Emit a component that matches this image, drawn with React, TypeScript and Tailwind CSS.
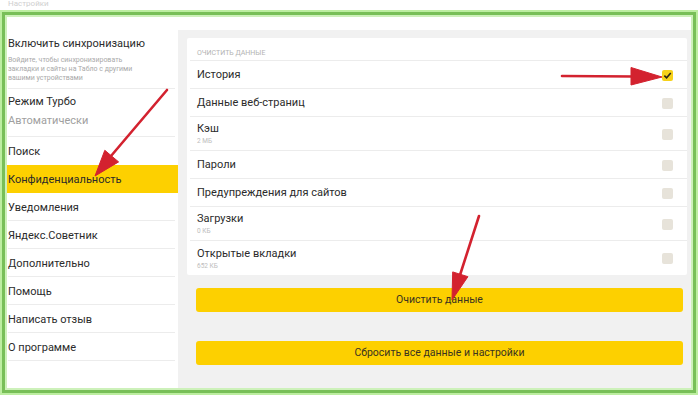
import React from 'react';

const font = { fontFamily: 'Roboto, "Noto Sans", "DejaVu Sans", sans-serif' };

type Item = { title: string; sub?: string; checked?: boolean };

const menu = [
  'Уведомления',
  'Яндекс.Советник',
  'Дополнительно',
  'Помощь',
  'Написать отзыв',
  'О программе',
];

const items: Item[] = [
  { title: 'История', checked: true },
  { title: 'Данные веб-страниц' },
  { title: 'Кэш', sub: '2 МБ' },
  { title: 'Пароли' },
  { title: 'Предупреждения для сайтов' },
  { title: 'Загрузки', sub: '0 КБ' },
  { title: 'Открытые вкладки', sub: '652 КБ' },
];

const Checkbox: React.FC<{ checked?: boolean }> = ({ checked }) =>
  checked ? (
    <div className="w-[11px] h-[11px] rounded-[2px] bg-[#f6d11a] flex items-center justify-center">
      <svg width="9" height="9" viewBox="0 0 10 10">
        <path d="M1.5 5.2 L4 7.6 L8.6 2.2" fill="none" stroke="#2a2417" strokeWidth="1.8" />
      </svg>
    </div>
  ) : (
    <div className="w-[11px] h-[11px] rounded-[2px] bg-[#e7e3da]" />
  );

const Arrows: React.FC = () => (
  <svg className="absolute inset-0 pointer-events-none" width="700" height="400" viewBox="0 0 700 400">
    <g fill="#d3222f" stroke="#d3222f">
      <line x1="167" y1="90" x2="111" y2="156" strokeWidth="2.6" strokeLinecap="round" />
      <polygon points="95,176 104.8,150.3 118.6,161.9" strokeWidth="1" />
      <line x1="562" y1="76" x2="634" y2="76.5" strokeWidth="2.6" strokeLinecap="round" />
      <polygon points="631,67.5 662,77 631,85" strokeWidth="1" />
      <line x1="479" y1="216" x2="460" y2="275" strokeWidth="2.6" strokeLinecap="round" />
      <polygon points="452,300 452.7,271.9 467.9,276.7" strokeWidth="1" />
    </g>
  </svg>
);

export default function App() {
  return (
    <div className="relative w-[700px] h-[400px] bg-white overflow-hidden text-[#2b2b2b]" style={font}>
      <div className="h-[10px] pl-[8px] text-[8px] leading-[8px] text-[#cfcfcf]">Настройки</div>

      <div className="w-[698px] h-[385px] border-[2px] border-[#bdeea1]">
        <div className="h-full border-[3px] border-[#78bf58]">
          <div className="h-full border-[2px] border-[#cdf1ba] flex flex-col bg-white">
            <div className="h-[13px] shrink-0 bg-white" />
            <div className="flex flex-1 min-h-0">
              {/* sidebar */}
              <div className="w-[171px] shrink-0 bg-white pl-[1px] pr-[3px]">
                <div className="h-[59px] pt-[7px] border-b border-[#ececec]">
                  <div className="text-[11px] leading-[14px]">Включить синхронизацию</div>
                  <div className="mt-[5px] text-[7px] leading-[9px] text-[#a9a9a9]">
                    Войдите, чтобы синхронизировать
                    <br />
                    закладки и сайты на Табло с другими
                    <br />
                    вашими устройствами
                  </div>
                </div>
                <div className="h-[48px] pt-[6px] border-b border-[#ececec]">
                  <div className="text-[11px] leading-[14px]">Режим Турбо</div>
                  <div className="mt-[5px] text-[11px] leading-[14px] text-[#a0a0a0]">Автоматически</div>
                </div>
                <div className="h-[28px] pt-[3px] flex items-center text-[11px]">Поиск</div>
                <div className="h-[28px] pt-[3px] -ml-[1px] -mr-[3px] pl-[1px] flex items-center bg-[#fdd000] text-[11px] text-[#2a2a2a]">
                  Конфиденциальность
                </div>
                {menu.map((m) => (
                  <div key={m} className="h-[28px] pt-[3px] flex items-center border-b border-[#ececec] text-[11px]">
                    {m}
                  </div>
                ))}
              </div>

              {/* content */}
              <div className="flex-1 bg-[#f1f1f1] pl-[9px] pr-[4px] pt-[8px]">
                <div className="bg-white rounded-[2px] pl-[3px]">
                  <div className="h-[23px] pl-[7px] pt-[11px] border-b border-[#ececec] text-[7px] leading-[9px] text-[#b3b3b3] uppercase">
                    Очистить данные
                  </div>
                  {items.map((it, i) => (
                    <div
                      key={it.title}
                      className={`flex items-center justify-between pl-[7px] pr-[14px] pt-[1px] ${
                        it.sub ? 'h-[34px]' : 'h-[28px]'
                      } ${i < items.length - 1 ? 'border-b border-[#ececec]' : ''}`}
                    >
                      <div className="flex flex-col">
                        <div className="text-[11px] leading-[14px]">{it.title}</div>
                        {it.sub && <div className="text-[6.5px] leading-[10px] text-[#bdbdbd]">{it.sub}</div>}
                      </div>
                      <Checkbox checked={it.checked} />
                    </div>
                  ))}
                </div>

                <div className="mt-[13px] ml-[9px] mr-[4px] h-[24px] rounded-[3px] bg-[#fdd000] flex items-center justify-center text-[10.5px] text-[#3a3320]">
                  Очистить данные
                </div>
                <div className="mt-[29px] ml-[9px] mr-[4px] h-[24px] rounded-[3px] bg-[#fdd000] flex items-center justify-center text-[10.5px] text-[#3a3320]">
                  Сбросить все данные и настройки
                </div>
              </div>
            </div>
          </div>
        </div>
      </div>

      <Arrows />
    </div>
  );
}
